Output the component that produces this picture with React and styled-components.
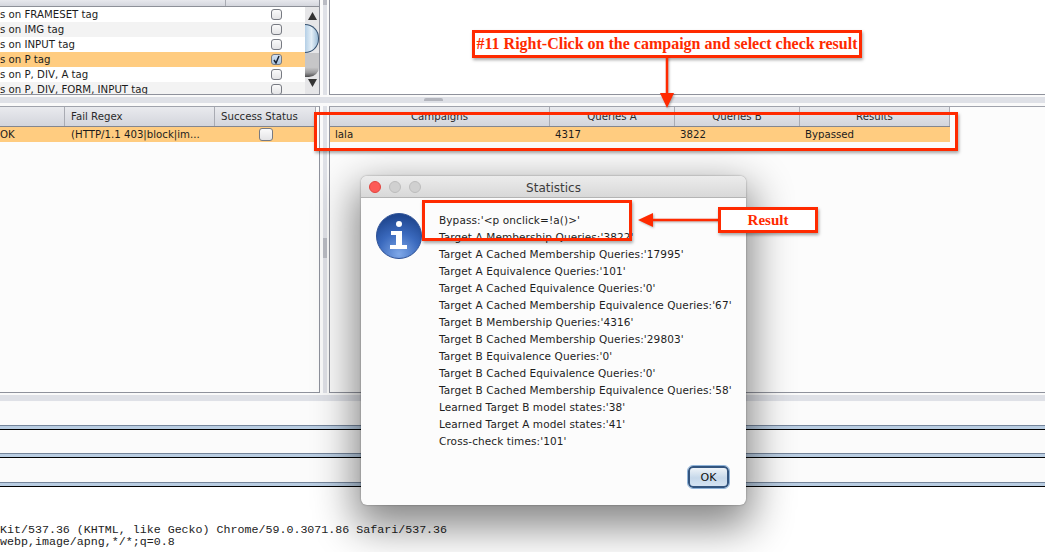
import styled, { createGlobalStyle } from "styled-components";

const GlobalStyle = createGlobalStyle`
  html, body { margin: 0; padding: 0; background: #fff; }
  body { font-family: "DejaVu Sans", "Noto Sans", sans-serif; }
`;

const Screen = styled.div`
  position: relative;
  width: 1045px;
  height: 552px;
  overflow: hidden;
  display: flex;
  flex-direction: column;
  background: #fff;
  color: #1c1c1c;
  font-size: 10.2px;
`;

const PaneRow = styled.div`
  display: grid;
  grid-template-columns: 320px 9px 1fr;
  height: ${(p) => p.$height}px;
`;

const Pane = styled.div`
  position: relative;
  overflow: hidden;
  background: ${(p) => p.$bg || "#fcfcfc"};
  border-right: ${(p) => (p.$left ? "1px solid #8f929c" : "none")};
  border-left: ${(p) => (p.$left ? "none" : "1px solid #8f929c")};
  border-bottom: 1px solid #8f929c;
  ${(p) => p.$top && "border-top: 1px solid #a0a3ac;"}
`;

const VSplit = styled.div`
  background: #fafafa;
  display: flex;
  justify-content: center;
`;

const VStrip = styled.div`
  width: 4px;
  background: #dfe1e7;
  padding-top: ${(p) => p.$gripTop}px;
`;

const VGrip = styled.div`
  height: ${(p) => p.$height}px;
  background: #b9bbc3;
`;

const HSplit = styled.div`
  height: ${(p) => p.$height}px;
  background: linear-gradient(#fafafa 0 2px, #dfe1e7 2px 8px, #fafafa 8px);
  padding-left: ${(p) => p.$gripLeft || 0}px;
`;

const HGrip = styled.div`
  width: 19px;
  height: 3px;
  margin-top: 3px;
  background: #b3b5bd;
  border-radius: 2px 2px 0 0;
`;

const ListHeader = styled.div`
  height: 6px;
  display: grid;
  grid-template-columns: 226px 1fr;
  background: linear-gradient(#e7e8ed, #d4d6dd);
  border-bottom: 1px solid #8d9098;
`;

const HeaderGap = styled.div`
  border-right: 1px solid #a9abb3;
`;

const ListBody = styled.div`
  display: grid;
  grid-template-columns: 1fr 14px;
`;

const ListRow = styled.div`
  height: 15px;
  display: grid;
  grid-template-columns: 226px 1fr;
  align-items: center;
  background: ${(p) => (p.$selected ? "#ffcc80" : p.$odd ? "#f3f3f3" : "#fff")};
  line-height: 15px;
  white-space: nowrap;
`;

const CellText = styled.span`
  padding-left: ${(p) => p.$pad || 0}px;
  overflow: hidden;
  white-space: nowrap;
`;

const CheckCell = styled.div`
  display: flex;
  justify-content: center;
  padding-left: ${(p) => p.$shift || 0}px;
`;

const CheckBox = styled.span`
  width: 11px;
  height: 11px;
  box-sizing: border-box;
  display: flex;
  align-items: center;
  justify-content: center;
  border: 1px solid #777a82;
  border-radius: 3px;
  background: ${(p) =>
    p.$checked
      ? "linear-gradient(#d4e2f2, #a9c4e0)"
      : "linear-gradient(#fafafa, #e4e4e6)"};
  ${(p) => p.$big && "width: 14px; height: 13px;"}
`;

const ScrollBar = styled.div`
  position: relative;
  height: 87px;
  background: #e6e6e8;
  display: flex;
  flex-direction: column;
  align-items: center;
  justify-content: space-between;
  padding: 5px 0 7px;
  box-sizing: border-box;
`;

const ScrollThumb = styled.div`
  position: absolute;
  left: 0;
  top: 17px;
  width: 14px;
  height: 29px;
  box-sizing: border-box;
  border: 1px solid #34506e;
  border-left: none;
  border-radius: 0 14px 14px 0;
  background: linear-gradient(90deg, #b4cfe6, #e4eff7 50%, #9dbdd8);
`;

const ScrollTail = styled.div`
  position: absolute;
  left: 0;
  top: 46px;
  width: 14px;
  height: 24px;
  border-radius: 0 0 10px 0;
  background: linear-gradient(#c6c6c8 0 60%, #9a9a9c 82%, #4c4c4e);
`;

const TableHead = styled.div`
  height: 19px;
  display: grid;
  grid-template-columns: ${(p) => p.$cols};
  width: ${(p) => p.$width}px;
  background: linear-gradient(#e9eaee, #d3d5dc);
  border-bottom: 1px solid #83868f;
`;

const HeadCell = styled.div`
  display: flex;
  align-items: center;
  justify-content: ${(p) => (p.$center ? "center" : "flex-start")};
  padding-left: ${(p) => (p.$center ? 0 : 6)}px;
  border-right: 1px solid #a9abb3;
  line-height: 19px;
  color: #2a2a2a;
`;

const TableRow = styled.div`
  height: 15px;
  display: grid;
  grid-template-columns: ${(p) => p.$cols};
  width: ${(p) => p.$width}px;
  align-items: center;
  background: #ffcc80;
  line-height: 15px;
`;

const Stripes = styled.div`
  display: flex;
  flex-direction: column;
`;

const Stripe = styled.div`
  height: ${(p) => p.$height + 5}px;
  background: linear-gradient(
    to top,
    #000 0 1px,
    #b9cde2 1px 4px,
    #75859b 4px 5px,
    #fbfbfb 5px
  );
`;

const LogText = styled.pre`
  margin: 37px 0 0;
  font-family: "Liberation Mono", "DejaVu Sans Mono", monospace;
  font-size: 11.65px;
  line-height: 12px;
  color: #222;
`;

/* Dialog */
const Dialog = styled.div`
  position: absolute;
  left: 361px;
  top: 176px;
  width: 385px;
  height: 329px;
  display: flex;
  flex-direction: column;
  background: #fcfcfc;
  border-radius: 6px;
  box-shadow: 0 16px 42px 6px rgba(0, 0, 0, 0.48), 0 0 2px rgba(0, 0, 0, 0.4);
  overflow: hidden;
`;

const TitleBar = styled.div`
  position: relative;
  height: 22px;
  box-sizing: border-box;
  padding-top: 2px;
  display: flex;
  align-items: center;
  justify-content: center;
  background: linear-gradient(#ececec, #d8d8d8);
  border-bottom: 1px solid #b4b4b4;
  font-size: 12px;
  color: #3c3c3c;
`;

const Lights = styled.div`
  position: absolute;
  left: 8px;
  top: 5px;
  display: flex;
  gap: 8px;
`;

const Light = styled.span`
  width: 12px;
  height: 12px;
  border-radius: 50%;
  box-sizing: border-box;
  background: ${(p) => p.$color};
  border: 1px solid ${(p) => p.$edge};
`;

const DialogBody = styled.div`
  flex: 1;
  display: grid;
  grid-template-columns: 78px 1fr;
  padding-top: 14px;
`;

const IconSlot = styled.div`
  padding: 1px 0 0 15px;
`;

const StatList = styled.div`
  display: flex;
  flex-direction: column;
  font-size: 10.5px;
  letter-spacing: 0.1px;
  line-height: 17px;
  color: #1e1e1e;
`;

const DialogFooter = styled.div`
  display: flex;
  justify-content: flex-end;
  padding: 0 17px 17px 0;
`;

const OkButton = styled.button`
  width: 41px;
  height: 22px;
  padding: 0;
  font: inherit;
  font-size: 11px;
  color: #111;
  border: 2px solid #33557f;
  border-radius: 5px;
  outline: 1px solid #8fb3d8;
  background: linear-gradient(#eef3f8, #c6d8ea 55%, #d4e3f2);
`;

/* Red annotations on top of the screenshot */
const RedBox = styled.div`
  position: absolute;
  left: ${(p) => p.$x}px;
  top: ${(p) => p.$y}px;
  width: ${(p) => p.$w}px;
  height: ${(p) => p.$h}px;
  box-sizing: border-box;
  display: flex;
  align-items: center;
  justify-content: center;
  border: 3px solid #ff2a00;
  background: ${(p) => p.$fill || "transparent"};
  box-shadow: 1px 2px 3px rgba(0, 0, 0, 0.35);
  font-family: "Liberation Serif", "Times New Roman", serif;
  font-weight: 700;
  font-size: ${(p) => p.$size || 15}px;
  color: #ff2a00;
  white-space: nowrap;
`;

const ArrowSvg = styled.svg`
  position: absolute;
  left: ${(p) => p.$x}px;
  top: ${(p) => p.$y}px;
  filter: drop-shadow(1px 1px 1px rgba(0, 0, 0, 0.3));
`;

const listRows = [
  { label: "s on FRAMESET tag" },
  { label: "s on IMG tag", odd: true },
  { label: "s on INPUT tag" },
  { label: "s on P tag", selected: true, checked: true },
  { label: "s on P, DIV, A tag" },
  { label: "s on P, DIV, FORM, INPUT tag", odd: true },
];

const stats = [
  "Bypass:'<p onclick=!a()>'",
  "Target A Membership Queries:'3822'",
  "Target A Cached Membership Queries:'17995'",
  "Target A Equivalence Queries:'101'",
  "Target A Cached Equivalence Queries:'0'",
  "Target A Cached Membership Equivalence Queries:'67'",
  "Target B Membership Queries:'4316'",
  "Target B Cached Membership Queries:'29803'",
  "Target B Equivalence Queries:'0'",
  "Target B Cached Equivalence Queries:'0'",
  "Target B Cached Membership Equivalence Queries:'58'",
  "Learned Target B model states:'38'",
  "Learned Target A model states:'41'",
  "Cross-check times:'101'",
];

const leftCols = "65px 150px 101px";
const rightCols = "220px 125px 125px 150px";

function InfoIcon() {
  return (
    <svg width="46" height="46" viewBox="0 0 46 46">
      <defs>
        <radialGradient id="infoBlue" cx="50%" cy="90%" r="85%">
          <stop offset="0%" stopColor="#7fa8e8" />
          <stop offset="55%" stopColor="#3a69bd" />
          <stop offset="100%" stopColor="#1f468f" />
        </radialGradient>
      </defs>
      <circle cx="23" cy="23" r="22.5" fill="url(#infoBlue)" stroke="#2f5296" />
      <circle cx="23" cy="11" r="3" fill="#fff" />
      <path d="M15 18h11v14h5v4H14v-4h6V22h-5z" fill="#fff" />
    </svg>
  );
}

function Tick() {
  return (
    <svg width="9" height="9" viewBox="0 0 9 9">
      <path d="M2 5l2 3 3-7" fill="none" stroke="#1b2433" strokeWidth="1.5" />
    </svg>
  );
}

function App() {
  return (
    <>
      <GlobalStyle />
      <Screen>
        <PaneRow $height={95}>
          <Pane $left>
            <ListHeader>
              <HeaderGap />
              <div />
            </ListHeader>
            <ListBody>
              <div>
                {listRows.map((row) => (
                  <ListRow key={row.label} $odd={row.odd} $selected={row.selected}>
                    <CellText>{row.label}</CellText>
                    <CheckCell $shift={22}>
                      <CheckBox $checked={row.checked}>{row.checked && <Tick />}</CheckBox>
                    </CheckCell>
                  </ListRow>
                ))}
              </div>
              <ScrollBar>
                <svg width="9" height="8" viewBox="0 0 9 8">
                  <path d="M4.5 0L9 8H0z" fill="#333" />
                </svg>
                <ScrollThumb />
                <ScrollTail />
                <svg width="9" height="8" viewBox="0 0 9 8">
                  <path d="M4.5 8L0 0h9z" fill="#333" />
                </svg>
              </ScrollBar>
            </ListBody>
          </Pane>
          <VSplit>
            <VStrip $gripTop={0}>
              <VGrip $height={5} />
            </VStrip>
          </VSplit>
          <Pane $bg="#fff" />
        </PaneRow>

        <HSplit $height={11} $gripLeft={424}>
          <HGrip />
        </HSplit>

        <PaneRow $height={287}>
          <Pane $left $top>
            <TableHead $cols={leftCols} $width={316}>
              <HeadCell />
              <HeadCell>Fail Regex</HeadCell>
              <HeadCell>Success Status</HeadCell>
            </TableHead>
            <TableRow $cols={leftCols} $width={316}>
              <CellText>OK</CellText>
              <CellText $pad={6}>(HTTP/1.1 403|block|im...</CellText>
              <CheckCell>
                <CheckBox $big />
              </CheckCell>
            </TableRow>
          </Pane>
          <VSplit>
            <VStrip $gripTop={132}>
              <VGrip $height={20} />
            </VStrip>
          </VSplit>
          <Pane $top>
            <TableHead $cols={rightCols} $width={620}>
              <HeadCell $center>Campaigns</HeadCell>
              <HeadCell $center>Queries A</HeadCell>
              <HeadCell $center>Queries B</HeadCell>
              <HeadCell $center>Results</HeadCell>
            </TableHead>
            <TableRow $cols={rightCols} $width={620}>
              <CellText $pad={5}>lala</CellText>
              <CellText $pad={5}>4317</CellText>
              <CellText $pad={5}>3822</CellText>
              <CellText $pad={5}>Bypassed</CellText>
            </TableRow>
          </Pane>
        </PaneRow>

        <HSplit $height={9} />

        <Stripes>
          <Stripe $height={23} />
          <Stripe $height={23} />
          <Stripe $height={24} />
        </Stripes>

        <LogText>
          {"Kit/537.36 (KHTML, like Gecko) Chrome/59.0.3071.86 Safari/537.36\nwebp,image/apng,*/*;q=0.8"}
        </LogText>

        <Dialog>
          <TitleBar>
            <Lights>
              <Light $color="#fc5b57" $edge="#e0443e" />
              <Light $color="#d0d0d0" $edge="#bcbcbc" />
              <Light $color="#d0d0d0" $edge="#bcbcbc" />
            </Lights>
            Statistics
          </TitleBar>
          <DialogBody>
            <IconSlot>
              <InfoIcon />
            </IconSlot>
            <StatList>
              {stats.map((line) => (
                <span key={line}>{line}</span>
              ))}
            </StatList>
          </DialogBody>
          <DialogFooter>
            <OkButton>OK</OkButton>
          </DialogFooter>
        </Dialog>

        <RedBox $x={472} $y={30} $w={390} $h={28} $fill="#fff" $size={16}>
          #11 Right-Click on the campaign and select check result
        </RedBox>
        <ArrowSvg $x={658} $y={57} width="18" height="53" viewBox="0 0 18 53">
          <path d="M9 0v38" stroke="#ff2a00" strokeWidth="2.5" />
          <path d="M2 36h14l-7 15z" fill="#ff2a00" />
        </ArrowSvg>
        <RedBox $x={314} $y={112} $w={644} $h={39} />
        <RedBox $x={422} $y={200} $w={210} $h={41} />
        <ArrowSvg $x={637} $y={211} width="82" height="18" viewBox="0 0 82 18">
          <path d="M14 9h67" stroke="#ff2a00" strokeWidth="2.5" />
          <path d="M1 9l15-7v14z" fill="#ff2a00" />
        </ArrowSvg>
        <RedBox $x={718} $y={207} $w={100} $h={26} $fill="#fff" $size={15}>
          Result
        </RedBox>
      </Screen>
    </>
  );
}

export default App;
